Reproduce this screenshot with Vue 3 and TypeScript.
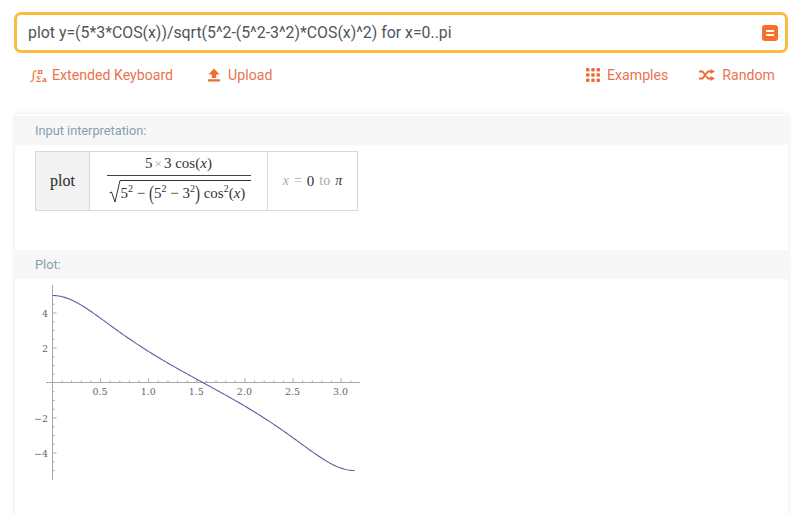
<template>
  <div class="page">
    <div class="search">
      <span class="query">plot y=(5*3*COS(x))/sqrt(5^2-(5^2-3^2)*COS(x)^2) for x=0..pi</span>
      <span class="equals"><i></i><i></i></span>
    </div>

    <nav class="links">
      <div class="group">
        <a class="link">
          <svg width="17" height="16" viewBox="0 0 17 16" class="icon keyboard">
            <text x="0" y="13" class="glyph big">∫</text>
            <text x="7.5" y="7" class="glyph">π</text>
            <text x="6" y="15" class="glyph">Σ</text>
            <text x="12" y="15" class="glyph">a</text>
          </svg>
          Extended Keyboard
        </a>
        <a class="link">
          <svg width="14" height="14" viewBox="0 0 14 14" class="icon">
            <path d="M7 0.5 L12.5 6.5 H9.2 V10 H4.8 V6.5 H1.5 Z M1 11.2 H13 V13.4 H1 Z" fill="currentColor" />
          </svg>
          Upload
        </a>
      </div>
      <div class="group right">
        <a class="link">
          <svg width="14" height="14" viewBox="0 0 14 14" class="icon">
            <template v-for="row in [0, 5.25, 10.5]" :key="row">
              <rect v-for="col in [0, 5.25, 10.5]" :key="col" :x="col" :y="row" width="3.5" height="3.5" rx="1" fill="currentColor" />
            </template>
          </svg>
          Examples
        </a>
        <a class="link">
          <svg width="16" height="12" viewBox="0 0 16 12" class="icon">
            <path d="M0 2.5 H3.5 L9 9.5 H12 M0 9.5 H3.5 L9 2.5 H12" fill="none" stroke="currentColor" stroke-width="1.8" />
            <path d="M11.5 0 L16 2.5 L11.5 5 Z M11.5 7 L16 9.5 L11.5 12 Z" fill="currentColor" />
          </svg>
          Random
        </a>
      </div>
    </nav>

    <section class="card">
      <h2 class="pod-title">Input interpretation:</h2>
      <div class="pod-body first">
        <div class="interp">
          <div class="cell head">plot</div>
          <div class="cell formula">
            <div class="fraction">
              <div class="numerator">5<span class="times">×</span>3 cos(<em>x</em>)</div>
              <div class="denominator">
                <svg width="12" height="23" viewBox="0 0 12 23" class="radical">
                  <path d="M0.5 13 L2.5 12 L6 22 L11 0.5 H12" fill="none" stroke="#333" stroke-width="1" />
                </svg>
                <div class="radicand">5<sup>2</sup> − <span class="paren">(</span>5<sup>2</sup> − 3<sup>2</sup><span class="paren">)</span> cos<sup>2</sup>(<em>x</em>)</div>
              </div>
            </div>
          </div>
          <div class="cell range"><em>x</em><span>=</span><b>0</b><span>to</span><em class="pi">π</em></div>
        </div>
      </div>

      <h2 class="pod-title">Plot:</h2>
      <div class="pod-body">
        <svg class="plot" width="360" height="205" viewBox="0 0 360 205">
          <g stroke="#a8a8a8" fill="none">
            <path d="M46 103.5 H360" />
            <path d="M52.5 6 V201" />
          </g>
          <g stroke="#a8a8a8">
            <line v-for="t in xTicks" :key="t.x" :x1="t.x" :x2="t.x" y1="103.5" :y2="103.5 - t.len" />
            <line v-for="t in yTicks" :key="t.y" x1="52.5" :x2="52.5 + t.len" :y1="t.y" :y2="t.y" />
          </g>
          <path :d="curve" fill="none" stroke="#5e5fa3" stroke-width="1.1" />
          <g class="tick-label">
            <text v-for="l in xLabels" :key="l" :x="xPos(l) - 0.5" y="115.5" text-anchor="middle">{{ l.toFixed(1) }}</text>
            <text v-for="l in yLabels" :key="l" x="48" :y="yPos(l) + 3.5" text-anchor="end">{{ l < 0 ? '−' + -l : l }}</text>
          </g>
        </svg>
      </div>
    </section>
  </div>
</template>

<script setup lang="ts">
import { computed } from 'vue'

const xPos = (v: number) => 52.5 + 96.2 * v
const yPos = (v: number) => 104 - 17.5 * v

const xLabels = [0.5, 1, 1.5, 2, 2.5, 3]
const yLabels = [4, 2, -2, -4]

const xTicks = computed(() => {
  const out: { x: number; len: number }[] = []
  for (let i = 1; i <= 31; i++) {
    out.push({ x: xPos(i / 10), len: i % 5 === 0 ? 4 : 2 })
  }
  return out
})

const yTicks = computed(() => {
  const out: { y: number; len: number }[] = []
  for (let i = -10; i <= 10; i++) {
    if (i === 0) continue
    out.push({ y: yPos(i / 2), len: i % 4 === 0 ? 4 : 2 })
  }
  return out
})

// y = 5*3*cos(x) / sqrt(5^2 - (5^2 - 3^2) * cos(x)^2)
const curve = computed(() => {
  const pts: string[] = []
  for (let i = 0; i <= 200; i++) {
    const x = (Math.PI * i) / 200
    const c = Math.cos(x)
    const y = (15 * c) / Math.sqrt(25 - 16 * c * c)
    pts.push(`${xPos(x).toFixed(2)} ${yPos(y).toFixed(2)}`)
  }
  return 'M' + pts.join(' L')
})
</script>

<style scoped>
.page {
  height: 514px;
  overflow: hidden;
  box-sizing: border-box;
  padding: 12px 12px 0 14px;
  font-family: Roboto, sans-serif;
  background: #fff;
}

.search {
  height: 41px;
  box-sizing: border-box;
  border: 3px solid #fbbc42;
  border-radius: 7px;
  display: flex;
  align-items: center;
  justify-content: space-between;
  padding: 0 7px 0 11px;
}

.query {
  font-size: 15.85px;
  color: #505558;
}

.equals {
  width: 16px;
  height: 16px;
  border-radius: 3px;
  background: #f96e28;
  display: flex;
  flex-direction: column;
  align-items: center;
  justify-content: center;
  gap: 2px;
}

.equals i {
  width: 8px;
  height: 2px;
  background: #fff;
}

.links {
  height: 44px;
  display: flex;
  align-items: center;
  justify-content: space-between;
  padding: 0 13px 0 16px;
}

.group {
  display: flex;
  gap: 34px;
}

.group.right {
  gap: 31px;
}

.link {
  display: flex;
  align-items: center;
  gap: 7px;
  font-size: 14.15px;
  color: #e9744d;
}

.icon {
  color: #ee6b35;
  flex: none;
}

.keyboard {
  margin-right: -2px;
}

.glyph {
  font-family: "DejaVu Serif", serif;
  font-size: 7.5px;
  font-weight: 700;
  fill: #ee6b35;
}

.glyph.big {
  font-size: 13px;
  font-weight: 400;
}

.card {
  margin: 17px 0 0 1px;
  padding-top: 2px;
  height: 420px;
  border-radius: 3px;
  background: #fff;
  box-shadow: 0 0 5px rgba(0, 0, 0, 0.11);
}

.pod-title {
  margin: 0;
  height: 29px;
  line-height: 29px;
  padding-left: 20px;
  background: #f7f7f7;
  font-size: 12.75px;
  font-weight: 400;
  color: #84a0ad;
}

.pod-body {
  padding: 6px 0 0 20px;
}

.pod-body.first {
  height: 99px;
}

.interp {
  display: inline-flex;
  height: 60px;
  box-sizing: border-box;
  border: 1px solid #d9d9d9;
  font-family: "Liberation Serif", serif;
  color: #333;
}

.cell {
  display: flex;
  align-items: center;
  justify-content: center;
}

.head {
  width: 53px;
  background: #f3f3f3;
  border-right: 1px solid #d9d9d9;
  font-size: 16px;
  -webkit-text-stroke: 0.15px #333;
}

.formula {
  width: 177px;
  border-right: 1px solid #d9d9d9;
  font-size: 15px;
}

.fraction {
  width: 144px;
  text-align: center;
  margin-top: -2px;
}

.numerator {
  height: 17px;
  line-height: 17px;
  border-bottom: 1px solid #444;
  padding-bottom: 3px;
}

.times {
  color: #aaa;
  font-size: 13px;
  margin: 0 2px;
}

.denominator {
  display: flex;
  height: 25px;
  margin-top: 4px;
  padding-left: 2px;
}

.radical {
  flex: none;
}

.radicand {
  flex: 1;
  text-align: left;
  border-top: 1px solid #333;
  line-height: 24px;
  white-space: nowrap;
  padding-right: 1px;
}

.radicand sup {
  font-size: 10px;
  line-height: 0;
}

.paren {
  display: inline-block;
  line-height: 1;
  transform: scale(1, 1.45);
}

.range {
  width: 89px;
  gap: 5px;
  font-size: 14px;
  color: #aaa;
}

.range b {
  font-weight: 400;
  color: #333;
  font-size: 15px;
}

.range .pi {
  color: #333;
}

.plot {
  display: block;
  margin: -6px 0 0 -35px;
}

.tick-label {
  font-family: "DejaVu Serif", serif;
  font-size: 9.5px;
  fill: #666;
}
</style>

<style>
html,
body {
  background: #fff;
  overflow: hidden;
}
</style>
